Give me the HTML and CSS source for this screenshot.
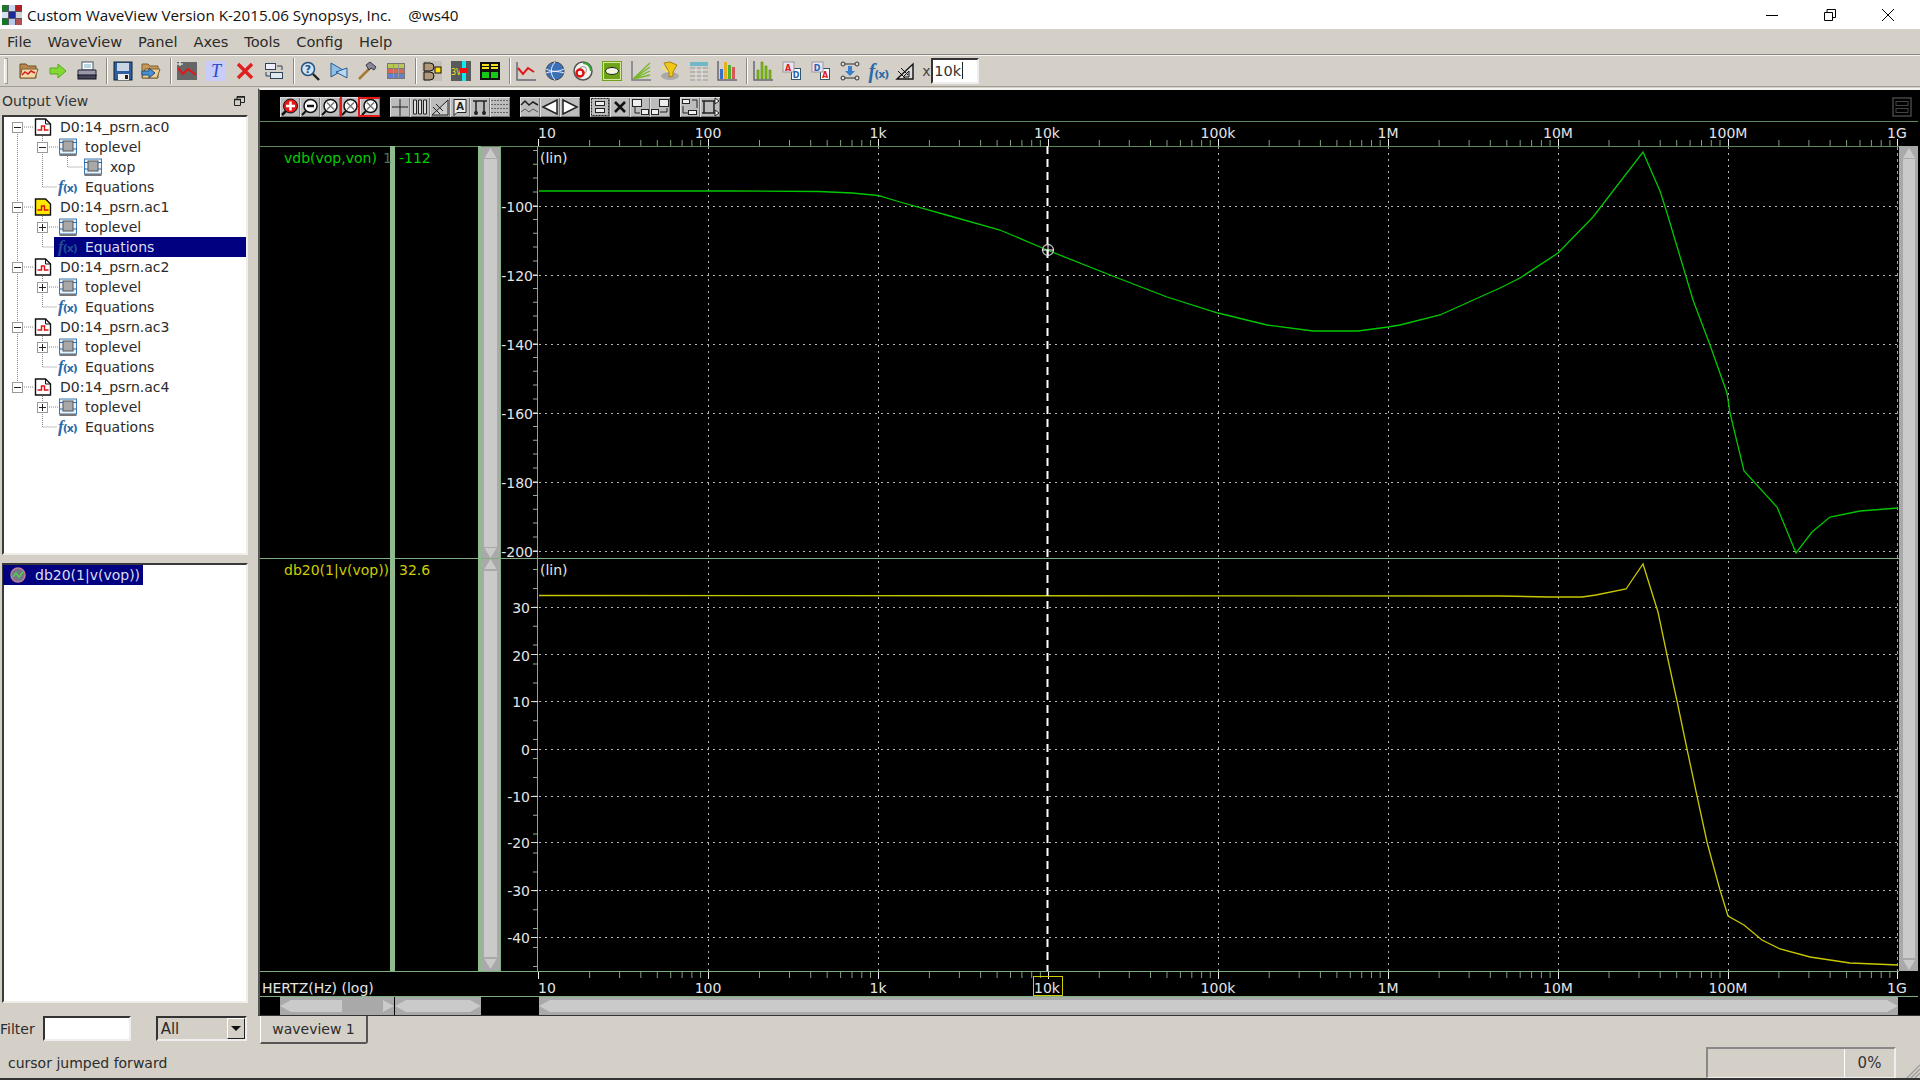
FILE: index.html
```html
<!DOCTYPE html>
<html lang="en">
<head>
<meta charset="utf-8">
<title>Custom WaveView</title>
<link rel="stylesheet" href="styles.css">
</head>
<body>
<svg class="defs" width="0" height="0">
  <symbol id="doc" viewBox="0 0 18 18"><path d="M1.5 1h10l5 5v11h-15z" fill="#fff" stroke="#111" stroke-width="1.4"/><path d="M11.5 1v5h5" fill="none" stroke="#111"/><path d="M3.5 12h4V8h3v4h4" fill="none" stroke="#e01010" stroke-width="1.4"/></symbol>
  <symbol id="docy" viewBox="0 0 18 18"><path d="M1.5 1h10l5 5v11h-15z" fill="#ffe800" stroke="#111" stroke-width="1.4"/><path d="M3.5 12h4V8h3v4h4" fill="none" stroke="#e01010" stroke-width="1.4"/></symbol>
  <symbol id="chip" viewBox="0 0 18 18"><rect x="0.5" y="1" width="17" height="15" fill="#e8f2fa" stroke="#3a7ab0"/><rect x="4" y="3" width="10" height="10" fill="#a8a8a8" stroke="#555"/><path d="M0 4.500h4M0 11h4M14 4.500h4M14 11h4" stroke="#2a6ab0"/><path d="M0.500 17h17" stroke="#777" stroke-width="2"/></symbol>
  <symbol id="fit" viewBox="0 0 20 20"><circle cx="10.500" cy="9" r="6.500" fill="#fff" stroke="#111" stroke-width="1.500"/><path d="M7 5.500l7 7M14 5.500l-7 7" stroke="#777" stroke-width="1.500"/><path d="M6 14l-4 4" stroke="#111" stroke-width="2"/></symbol>
  <g id="dec"><path d="M51.100 0v6M81.100 0v6M102.300 0v6M118.800 0v6M132.200 0v6M143.600 0v6M153.400 0v6M162.100 0v6" stroke="#7f9f7f" fill="none"/></g>
  <g id="decades"><use href="#dec" x="538.500"/><use href="#dec" x="708.400"/><use href="#dec" x="878.300"/><use href="#dec" x="1048.200"/><use href="#dec" x="1218.100"/><use href="#dec" x="1388"/><use href="#dec" x="1557.900"/><use href="#dec" x="1727.800"/></g>
</svg>

<header class="title">
  <svg class="title-icon" width="20" height="20" viewBox="0 0 20 20"><rect width="20" height="20" fill="#556"/><rect x="0" y="0" width="6" height="6" fill="#1a7a2a"/><rect x="7" y="0" width="6" height="6" fill="#c8d8f0"/><rect x="14" y="0" width="6" height="6" fill="#b02020"/><rect x="0" y="7" width="6" height="6" fill="#d8e0f0"/><rect x="7" y="7" width="6" height="6" fill="#1a2a9a"/><rect x="14" y="7" width="6" height="6" fill="#d0d0d0"/><rect x="0" y="14" width="6" height="6" fill="#107a20"/><rect x="7" y="14" width="6" height="6" fill="#b8c8e8"/><rect x="14" y="14" width="6" height="6" fill="#b05050"/></svg>
  <span class="title-text">Custom WaveView Version K-2015.06 Synopsys, Inc.</span>
  <span class="title-host">@ws40</span>
  <div class="win">
    <svg width="12" height="12" viewBox="0 0 12 12"><path d="M0 6.500h12" stroke="#000"/></svg>
    <svg width="12" height="12" viewBox="0 0 12 12"><path d="M.5 3.500h8v8h-8zM3 3.500V.5h8.500v8h-3" fill="none" stroke="#000"/></svg>
    <svg width="12" height="12" viewBox="0 0 12 12"><path d="M0 0l12 12M12 0L0 12" stroke="#000"/></svg>
  </div>
</header>

<nav class="menu"><span>File</span><span>WaveView</span><span>Panel</span><span>Axes</span><span>Tools</span><span>Config</span><span>Help</span></nav>

<div class="tb">
  <i class="grip"></i>
  <div class="tg">
    <svg class="ti" viewBox="0 0 20 20"><path d="M1 3h6l2 2h8v12H1z" fill="#b88850" stroke="#705020"/><path d="M3 8h16l-3 9H1z" fill="#f0d8a8" stroke="#806030"/><path d="M3 14l3-3 3 2 3-3 4 2" fill="none" stroke="#d02020" stroke-width="1.500"/></svg>
    <svg class="ti" viewBox="0 0 20 20"><path d="M2 7h8V3l8 7-8 7v-4H2z" fill="#84d832" stroke="#58a820"/></svg>
    <svg class="ti" viewBox="0 0 20 20"><rect x="5" y="1" width="11" height="8" fill="#fff" stroke="#456"/><path d="M7 4h7M7 6h7" stroke="#7ab"/><path d="M1 9h18v6H1z" fill="#99a" stroke="#223"/><rect x="1" y="14" width="18" height="4" fill="#445" stroke="#112"/></svg>
  </div>
  <i class="sep"></i>
  <div class="tg">
    <svg class="ti" viewBox="0 0 20 20"><rect x="1" y="1" width="18" height="18" fill="#2f5f9f" stroke="#123"/><rect x="4" y="2" width="12" height="8" fill="#c8d4e4"/><rect x="5" y="13" width="11" height="6" fill="#eee"/><rect x="12" y="14" width="3" height="4" fill="#222"/></svg>
    <svg class="ti" viewBox="0 0 20 20"><path d="M1 3h6l2 2h8v12H1z" fill="#c89858" stroke="#806030"/><path d="M4 8h15l-3 9H1z" fill="#ecd098" stroke="#806030"/><path d="M1 10h7V7l6 5-6 5v-3H1z" fill="#4a90d0" stroke="#205080"/></svg>
  </div>
  <i class="sep"></i>
  <div class="tg">
    <svg class="ti" viewBox="0 0 20 20"><rect width="20" height="18" y="1" fill="#666"/><path d="M1 7l5 6 5-5 8 6" fill="none" stroke="#e01818" stroke-width="2"/><path d="M3 0v5M0 3h6" stroke="#fff"/></svg>
    <svg class="ti" viewBox="0 0 20 20"><rect width="20" height="20" fill="#c8ccf8"/><text x="10" y="15.500" class="t-t">T</text></svg>
    <svg class="ti" viewBox="0 0 20 20"><path d="M3 3l14 14M17 3L3 17" stroke="#e02020" stroke-width="3.400"/></svg>
    <svg class="ti" viewBox="0 0 20 20"><rect x="1.500" y="2.500" width="10" height="6" fill="#eef" stroke="#345"/><rect x="6.500" y="11.500" width="12" height="6" fill="#dde8f0" stroke="#345"/><path d="M13 5h5v4M7 15H2v-4" fill="none" stroke="#345"/></svg>
  </div>
  <i class="sep"></i>
  <div class="tg">
    <svg class="ti" viewBox="0 0 20 20"><circle cx="8" cy="8" r="6.500" fill="#cfe4f8" stroke="#24507a" stroke-width="1.500"/><text x="8" y="12" class="t-q">?</text><path d="M13 13l6 6" stroke="#222" stroke-width="2.400"/></svg>
    <svg class="ti" viewBox="0 0 20 20"><path d="M2 2l12 7-12 7z" fill="#8cc0e8" stroke="#2a5a90"/><path d="M18 17L7 11l11-4z" fill="#b8d8f0" stroke="#2a5a90"/></svg>
    <svg class="ti" viewBox="0 0 20 20"><path d="M2 18L13 7" stroke="#a87838" stroke-width="2.500"/><path d="M9 4l4-3 6 5-2 3-3-2-2 2z" fill="#889" stroke="#334"/></svg>
    <svg class="ti" viewBox="0 0 20 20"><rect x="1" y="2" width="18" height="16" fill="#777"/><rect x="2" y="3" width="16" height="4" fill="#b8c850"/><rect x="2" y="8" width="16" height="4" fill="#d86858"/><rect x="2" y="13" width="16" height="4" fill="#6880c8"/><path d="M7.500 3v14M12.500 3v14" stroke="#999"/></svg>
  </div>
  <i class="sep"></i>
  <div class="tg">
    <svg class="ti" viewBox="0 0 20 20"><rect width="20" height="20" fill="#c4c0b8"/><path d="M2 2h6a4 4 0 010 8H2zM2 11h6a4 4 0 010 8H2z" fill="#b09878" stroke="#111"/><rect x="13" y="6" width="6" height="6" fill="#ffe000" stroke="#111"/></svg>
    <svg class="ti" viewBox="0 0 20 20"><rect width="20" height="20" fill="#5a5a5a"/><text x="0" y="14" class="t-v">3V</text><rect x="11" y="0" width="4" height="20" fill="#10e8f0"/><rect x="9" y="7" width="8" height="5" fill="#f01010"/></svg>
    <svg class="ti" viewBox="0 0 20 20"><rect x="0" y="1" width="20" height="18" fill="#111"/><rect x="2" y="3" width="7" height="2" fill="#f0e020"/><rect x="11" y="3" width="7" height="2" fill="#f0e020"/><rect x="2" y="6" width="7" height="2" fill="#f0e020"/><rect x="11" y="6" width="7" height="2" fill="#f0e020"/><rect x="2" y="11" width="7" height="6" fill="#18c818"/><rect x="11" y="11" width="7" height="6" fill="#18c818"/></svg>
  </div>
  <i class="sep"></i>
  <div class="tg">
    <svg class="ti" viewBox="0 0 20 20"><path d="M1 1v18h19" fill="none" stroke="#667" stroke-width="1.500"/><path d="M2 7l5 6 5-6 6 4" fill="none" stroke="#e01818" stroke-width="2"/></svg>
    <svg class="ti" viewBox="0 0 20 20"><circle cx="10" cy="10" r="9" fill="#3a70b8" stroke="#444"/><path d="M1 8c6 3 12 3 18 0M1 12c6-2 12-2 18 0M10 1c-5 6-5 12 0 18" fill="none" stroke="#eef"/></svg>
    <svg class="ti" viewBox="0 0 20 20"><circle cx="10" cy="10" r="9" fill="#f4f4f0" stroke="#555" stroke-width="1.500"/><path d="M10 2a8 8 0 018 8" fill="none" stroke="#38a838" stroke-width="2"/><circle cx="10" cy="9" r="3.500" fill="none" stroke="#999"/><circle cx="7" cy="12" r="3.500" fill="#fff" stroke="#e01010" stroke-width="2.500"/></svg>
    <svg class="ti" viewBox="0 0 20 20"><rect width="20" height="20" fill="#70a418"/><rect x="1.500" y="1.500" width="17" height="17" fill="none" stroke="#d8e8a0"/><ellipse cx="10" cy="10" rx="6.500" ry="3.500" fill="#f0f4e0" stroke="#222"/></svg>
    <svg class="ti" viewBox="0 0 20 20"><path d="M1 0v19h19" fill="none" stroke="#778" stroke-width="1.500"/><path d="M2 18L19 2M2 18L19 6M2 18L19 10M2 18L19 14" stroke="#78b828" stroke-width="1.300"/></svg>
    <svg class="ti" viewBox="0 0 20 20"><ellipse cx="10" cy="15" rx="9" ry="4" fill="#aaa"/><path d="M4 2l6-1 7 3-4 7v4l-4 1v-5z" fill="#f0c818" stroke="#a88010"/><path d="M2 6l6 5" stroke="#f8e060" stroke-width="2"/></svg>
    <svg class="ti" viewBox="0 0 20 20"><rect x="1" y="1" width="18" height="4" fill="#70b8c8"/><path d="M1 7h18M1 11h18M1 15h18M1 19h18" stroke="#aaa" stroke-width="1.500"/><path d="M7 6v14M13 6v14" stroke="#e8e8e8"/></svg>
    <svg class="ti" viewBox="0 0 20 20"><path d="M1 0v19h19" fill="none" stroke="#667" stroke-width="1.500"/><rect x="3" y="8" width="3" height="10" fill="#3a70c8"/><rect x="7" y="1" width="3" height="17" fill="#e8b020"/><rect x="11" y="4" width="3" height="14" fill="#50b030"/><rect x="15" y="6" width="3" height="12" fill="#d85858"/></svg>
  </div>
  <i class="sep"></i>
  <div class="tg">
    <svg class="ti" viewBox="0 0 20 20"><path d="M1 0v19h19" fill="none" stroke="#667" stroke-width="1.500"/><path d="M4 9h2v9H4zM8 1h2v17H8zM12 5h2v13h-2zM16 9h2v9h-2z" fill="#80c010" stroke="#508808" stroke-width=".6"/></svg>
    <svg class="ti" viewBox="0 0 20 20"><rect x="9.500" y="7.500" width="9" height="11" fill="#fff" stroke="#356"/><rect x="1" y="1" width="11" height="10" fill="#e8e4f8" stroke="#999"/><text x="6" y="9.500" class="t-a">A</text><text x="14" y="16.500" class="t-d">D</text></svg>
    <svg class="ti" viewBox="0 0 20 20"><rect x="9.500" y="7.500" width="9" height="11" fill="#fff" stroke="#356"/><rect x="1" y="1" width="11" height="10" fill="#e8e4f8" stroke="#999"/><text x="6" y="9.500" class="t-d">D</text><text x="14" y="16.500" class="t-a">A</text></svg>
    <svg class="ti" viewBox="0 0 20 20"><path d="M1 3h18M1 17h18" stroke="#333"/><circle cx="3" cy="3" r="2" fill="#ddd" stroke="#333"/><circle cx="17" cy="3" r="2" fill="#ddd" stroke="#333"/><circle cx="3" cy="17" r="2" fill="#ddd" stroke="#333"/><circle cx="17" cy="17" r="2" fill="#ddd" stroke="#333"/><path d="M8 5h4v5h3l-5 5-5-5h3z" fill="#3a80d0"/></svg>
    <span class="ti fx big">f<small>(x)</small></span>
    <svg class="ti" viewBox="0 0 20 20"><path d="M2 18L18 3v15z" fill="#ddd" stroke="#111" stroke-width="1.400"/><path d="M8 16l6-6v6z" fill="#ccc" stroke="#111"/><path d="M3 10l7 7M6 7l7 7" stroke="#111"/></svg>
  </div>
  <span class="x-label">x</span>
  <div class="entry"><span>10k</span><i class="caret"></i></div>
</div>

<main class="main">
  <aside class="left">
    <div class="ov-head"><span>Output View</span><svg width="11" height="10" viewBox="0 0 11 10"><path d="M.5 3.500h6v6h-6zM3 3V.5h7.500v6H7" fill="none" stroke="#222"/><path d="M0 3.500h7M3 1h8" stroke="#222" stroke-width="1.500"/></svg></div>
    <div class="tree">
      <svg class="tree-lines" width="242" height="436" viewBox="4 117 242 436"><path d="M17.500 132V382M24 127h10M24 207h10M24 267h10M24 327h10M24 387h10M42.500 136V187H57M49 147h9M67.500 154V167H83M42.500 216V247H57M49 227h9M42.500 276V307H57M49 287h9M42.500 336V367H57M49 347h9M42.500 396V427H57M49 407h9" fill="none" stroke="#888" stroke-dasharray="1 1"/></svg>
      <div class="row l0"><b class="exp minus"></b><svg class="ic"><use href="#doc"/></svg><span class="lbl">D0:14_psrn.ac0</span></div>
      <div class="row l1"><b class="exp minus"></b><div class="item"><svg class="ic"><use href="#chip"/></svg><span class="lbl">toplevel</span></div></div>
      <div class="row l2"><b class="exp none"></b><div class="item"><svg class="ic"><use href="#chip"/></svg><span class="lbl">xop</span></div></div>
      <div class="row l1"><b class="exp none"></b><div class="item"><span class="fx">f<small>(x)</small></span><span class="lbl">Equations</span></div></div>
      <div class="row l0"><b class="exp minus"></b><svg class="ic"><use href="#docy"/></svg><span class="lbl">D0:14_psrn.ac1</span></div>
      <div class="row l1"><b class="exp plus"></b><div class="item"><svg class="ic"><use href="#chip"/></svg><span class="lbl">toplevel</span></div></div>
      <div class="row l1"><b class="exp none"></b><div class="item sel"><span class="fx">f<small>(x)</small></span><span class="lbl">Equations</span></div></div>
      <div class="row l0"><b class="exp minus"></b><svg class="ic"><use href="#doc"/></svg><span class="lbl">D0:14_psrn.ac2</span></div>
      <div class="row l1"><b class="exp plus"></b><div class="item"><svg class="ic"><use href="#chip"/></svg><span class="lbl">toplevel</span></div></div>
      <div class="row l1"><b class="exp none"></b><div class="item"><span class="fx">f<small>(x)</small></span><span class="lbl">Equations</span></div></div>
      <div class="row l0"><b class="exp minus"></b><svg class="ic"><use href="#doc"/></svg><span class="lbl">D0:14_psrn.ac3</span></div>
      <div class="row l1"><b class="exp plus"></b><div class="item"><svg class="ic"><use href="#chip"/></svg><span class="lbl">toplevel</span></div></div>
      <div class="row l1"><b class="exp none"></b><div class="item"><span class="fx">f<small>(x)</small></span><span class="lbl">Equations</span></div></div>
      <div class="row l0"><b class="exp minus"></b><svg class="ic"><use href="#doc"/></svg><span class="lbl">D0:14_psrn.ac4</span></div>
      <div class="row l1"><b class="exp plus"></b><div class="item"><svg class="ic"><use href="#chip"/></svg><span class="lbl">toplevel</span></div></div>
      <div class="row l1"><b class="exp none"></b><div class="item"><span class="fx">f<small>(x)</small></span><span class="lbl">Equations</span></div></div>
    </div>
    <div class="hsash"></div>
    <div class="list">
      <div class="list-row"><svg width="16" height="16" viewBox="0 0 16 16"><circle cx="8" cy="8" r="7" fill="#77778a" stroke="#c08090" stroke-width="1.500"/><path d="M3 10l3-4 3 4 4-5" fill="none" stroke="#50d050" stroke-width="1.500"/></svg><span>db20(1|v(vop))</span></div>
    </div>
    <div class="filter">
      <span>Filter</span>
      <div class="f-input"></div>
      <div class="combo"><span>All</span><b class="combo-btn"></b></div>
    </div>
  </aside>

  <section class="right">
    <div class="wave">
      <div class="tools2">
        <div class="g2">
          <i class="b2"><svg viewBox="0 0 20 20"><circle cx="10.500" cy="9" r="7" fill="#e81818" stroke="#111"/><path d="M6 9h9M10.500 4.500v9" stroke="#fff" stroke-width="2.500"/><path d="M6 14l-4 4" stroke="#111" stroke-width="2.500"/></svg></i>
          <i class="b2"><svg viewBox="0 0 20 20"><circle cx="10.500" cy="9" r="6.500" fill="#fff" stroke="#111" stroke-width="1.500"/><path d="M7 9h7" stroke="#111" stroke-width="2.500"/><path d="M6 14l-4 4" stroke="#111" stroke-width="2"/></svg></i>
          <i class="b2"><svg><use href="#fit"/></svg></i>
          <i class="b2"><svg viewBox="0 0 20 20"><use href="#fit" width="20" height="20"/><path d="M1 0v20M19 0v20" stroke="#e81818" stroke-width="2"/></svg></i>
          <i class="b2"><svg viewBox="0 0 20 20"><use href="#fit" width="20" height="20"/><path d="M0 1h20M0 19h20" stroke="#e81818" stroke-width="2"/></svg></i>
        </div>
        <div class="g2">
          <i class="b2"><svg viewBox="0 0 20 20"><path d="M2 10h16M10 2v17" stroke="#222"/></svg></i>
          <i class="b2"><svg viewBox="0 0 20 20"><path d="M3.500 3h3v14h-3zM8.500 3h3v14h-3zM13.500 3h3v14h-3z" fill="#ddd" stroke="#222"/></svg></i>
          <i class="b2"><svg viewBox="0 0 20 20"><path d="M2 18L18 3v15z" fill="#ccc" stroke="#222"/><path d="M3 10l7 7M6 7l7 7" stroke="#222"/></svg></i>
          <i class="b2"><svg viewBox="0 0 20 20"><path d="M4 2.500h12v13H7l-3 3z" fill="#eee" stroke="#222"/><text x="10" y="13" class="t-b">A</text></svg></i>
          <i class="b2"><svg viewBox="0 0 20 20"><path d="M3 4h14M6 4v11M14 4v11" stroke="#222" stroke-width="1.500"/><circle cx="6" cy="16" r="2" fill="#222"/><circle cx="14" cy="16" r="2" fill="#222"/></svg></i>
          <i class="b2"><svg viewBox="0 0 20 20"><path d="M1 3.500h18M1 7.500h18M1 11.500h18M1 15.500h18" stroke="#666" stroke-dasharray="2 1"/></svg></i>
        </div>
        <div class="g2">
          <i class="b2"><svg viewBox="0 0 20 20"><path d="M1 8l4-4 4 4 4-3 5 3" fill="none" stroke="#222" stroke-width="1.500"/><path d="M1 15l4-3 4 3 4-3 5 3" fill="none" stroke="#555"/></svg></i>
          <i class="b2"><svg viewBox="0 0 20 20"><path d="M3 10l14-7v14z" fill="#fff" stroke="#222" stroke-width="1.500"/></svg></i>
          <i class="b2"><svg viewBox="0 0 20 20"><path d="M17 10L3 3v14z" fill="#fff" stroke="#222" stroke-width="1.500"/></svg></i>
        </div>
        <div class="g2">
          <i class="b2"><svg viewBox="0 0 20 20"><rect x="1.500" y="1.500" width="17" height="17" fill="none" stroke="#222" stroke-dasharray="2 1"/><rect x="5.500" y="4.500" width="9" height="4" fill="#eee" stroke="#222"/><rect x="5.500" y="11.500" width="9" height="4" fill="#eee" stroke="#222"/></svg></i>
          <i class="b2"><svg viewBox="0 0 20 20"><path d="M5 5l10 10M15 5L5 15" stroke="#111" stroke-width="2.500"/></svg></i>
          <i class="b2"><svg viewBox="0 0 20 20"><rect x="2.500" y="2.500" width="9" height="7" fill="#eee" stroke="#222"/><rect x="11.500" y="12.500" width="7" height="5" fill="#eee" stroke="#222"/><path d="M5 10v6h5" fill="none" stroke="#222"/></svg></i>
          <i class="b2"><svg viewBox="0 0 20 20"><rect x="9.500" y="2.500" width="9" height="7" fill="#eee" stroke="#222"/><rect x="1.500" y="12.500" width="7" height="5" fill="#eee" stroke="#222"/><path d="M10 15h7v-4" fill="none" stroke="#222"/></svg></i>
        </div>
        <div class="g2">
          <i class="b2"><svg viewBox="0 0 20 20"><rect x="2.500" y="2.500" width="7" height="4" fill="#eee" stroke="#222"/><rect x="8.500" y="13.500" width="8" height="4" fill="#eee" stroke="#222"/><path d="M3 9v7h5M12 3h5v8" fill="none" stroke="#222"/></svg></i>
          <i class="b2"><svg viewBox="0 0 20 20"><path d="M2 4h13M2 16h13M4 4v12M14 4v12" stroke="#222" stroke-width="1.500"/><path d="M15 1l4 3-4 3zM15 13l4 3-4 3z" fill="#fff" stroke="#222"/></svg></i>
        </div>
        <svg class="pane-ic" width="20" height="20" viewBox="0 0 20 20"><rect x="1" y="1" width="18" height="18" fill="none" stroke="#444" stroke-width="1.500"/><rect x="4" y="4.500" width="12" height="4" fill="none" stroke="#444"/><rect x="4" y="11.500" width="12" height="4" fill="none" stroke="#444"/></svg>
      </div>

      <svg class="plot" width="1658" height="876" viewBox="260 121 1658 876">
        <!-- scrollbar troughs -->
        <rect x="481" y="146" width="19" height="825" class="trough"/>
        <rect x="1899" y="146" width="19" height="825" class="trough"/>
        <rect x="484" y="159" width="13" height="388" class="thumb"/>
        <rect x="484" y="571" width="13" height="386" class="thumb"/>
        <rect x="1903" y="159" width="12" height="799" class="thumb"/>
        <path class="thumb" d="M490.500 148l6 10h-12zM490.500 558l6-10h-12zM490.500 559l6 10h-12zM490.500 969l6-10h-12zM1909 148l6 10h-12zM1909 970l6-10h-12z"/>

        <!-- frame -->
        <path class="frame" d="M260 121.500h1658M260 146.500h1639"/>
        <path class="frame2" d="M260 558.500h1639M260 971.500h1639M260 996.500h1658M500.500 146v825M537.500 146v825"/>
        <rect x="390" y="146" width="5" height="825" class="bar"/>
        <rect x="478" y="146" width="3" height="825" class="bar"/>

        <!-- axis ticks -->
        <use href="#decades" y="140"/>
        <use href="#decades" y="972"/>
        <path class="major" d="M538.500 139v7M708.500 139v7M878.500 139v7M1048.500 139v7M1218.500 139v7M1388.500 139v7M1558.500 139v7M1728.500 139v7M1897.500 139v7M538.500 972v7M708.500 972v7M878.500 972v7M1048.500 972v7M1218.500 972v7M1388.500 972v7M1558.500 972v7M1728.500 972v7M1897.500 972v7"/>
        <path class="ytick y1" d="M535.500 150V558"/>
        <path class="ytick y2" d="M535.500 569V968"/>
        <path class="ymajor" d="M533 206.500h5M533 275.500h5M533 344.500h5M533 413.500h5M533 482.500h5M533 551.500h5M531 607.500h7M531 654.500h7M531 701.500h7M531 749.500h7M531 796.500h7M531 842.500h7M531 890.500h7M531 937.500h7"/>

        <!-- grid -->
        <path class="grid" d="M539 206.500H1897M539 275.500H1897M539 344.500H1897M539 413.500H1897M539 482.500H1897M539 551.500H1897M539 607.500H1897M539 654.500H1897M539 701.500H1897M539 749.500H1897M539 796.500H1897M539 842.500H1897M539 890.500H1897M539 937.500H1897"/>
        <path class="grid" d="M708.500 147V971M878.500 147V971M1218.500 147V971M1388.500 147V971M1558.500 147V971M1728.500 147V971"/>
        <path class="edge" d="M1897.500 147V971"/>

        <!-- waveforms -->
        <polyline class="wave-g" points="539,191 733,191 819,191.500 852,193 878,195.500 900,202 950,216 1000,230 1047,250 1110,275 1167,297 1218,313 1267,325 1313,331 1358,331 1388,327 1400,325 1440,315 1480,297 1500,288 1520,278 1558,253 1593,217 1643,152 1660,191 1667,213 1693,300 1710,345 1727,393 1730,413 1744,471 1777,507 1796,553 1812,532 1830,517 1860,511 1898,508"/>
        <polyline class="wave-y" points="539,595.500 1500,596 1550,597 1582,597 1596,595 1626,589 1643,564 1658,612 1667,655 1677,701 1687,749 1697,796 1707,842 1711,857 1720,890 1728,916 1744,925 1762,940 1780,949 1810,957 1850,963 1898,965"/>

        <!-- cursor -->
        <path class="cursor" d="M1047.500 146V971"/>
        <circle class="mk" cx="1048" cy="250" r="5.500"/>
        <path class="mk2" d="M1042 250h12M1048 244v12"/>

        <!-- axis labels -->
        <g class="ax">
          <text x="538" y="138">10</text>
          <g class="c"><text x="708" y="138">100</text><text x="878" y="138">1k</text><text x="1047" y="138">10k</text><text x="1218" y="138">100k</text><text x="1388" y="138">1M</text><text x="1558" y="138">10M</text><text x="1728" y="138">100M</text><text x="1897" y="138">1G</text></g>
          <text x="540" y="163">(lin)</text>
          <text x="540" y="575">(lin)</text>
          <g class="r">
            <text x="533" y="212">-100</text><text x="533" y="281">-120</text><text x="533" y="350">-140</text><text x="533" y="419">-160</text><text x="533" y="488">-180</text><text x="533" y="557">-200</text>
            <text x="530" y="613">30</text><text x="530" y="661">20</text><text x="530" y="707">10</text><text x="530" y="755">0</text><text x="530" y="802">-10</text><text x="530" y="848">-20</text><text x="530" y="896">-30</text><text x="530" y="943">-40</text>
          </g>
          <text x="262" y="993">HERTZ(Hz) (log)</text>
          <text x="538" y="993">10</text>
          <g class="c"><text x="708" y="993">100</text><text x="878" y="993">1k</text><text x="1047" y="993">10k</text><text x="1218" y="993">100k</text><text x="1388" y="993">1M</text><text x="1558" y="993">10M</text><text x="1728" y="993">100M</text><text x="1897" y="993">1G</text></g>
        </g>
        <rect class="hl" x="1033.500" y="976.500" width="29" height="19"/>

        <!-- signal names -->
        <text class="sig-g" x="284" y="163">vdb(vop,von)</text>
        <text class="sig-dim" x="383" y="163">1</text>
        <text class="sig-g" x="399" y="163">-112</text>
        <text class="sig-y" x="284" y="575">db20(1|v(vop))</text>
        <text class="sig-y" x="399" y="575">32.6</text>
      </svg>

      <div class="hscrolls">
        <div class="sb s1"><i class="ta-l"></i><i class="sb-th"></i><i class="ta-r"></i></div>
        <div class="sb s2"><i class="ta-l"></i><i class="sb-th"></i><i class="ta-r"></i></div>
        <div class="sb s3"><i class="ta-l"></i><i class="sb-th"></i><i class="ta-r"></i></div>
      </div>
    </div>
    <div class="tabs"><div class="tab">waveview 1</div></div>
  </section>
</main>

<footer class="status">
  <span class="st-msg">cursor jumped forward</span>
  <div class="progress"><div class="pg-bar"></div><div class="pg-val">0%</div></div>
  <svg class="sz" width="15" height="15" viewBox="0 0 15 15"><path d="M15 2L2 15M15 6L6 15M15 10L10 15" stroke="#999" stroke-width="1.200"/></svg>
</footer>
</body>
</html>
```

FILE: styles.css
```css
html, body { margin: 0; padding: 0; }
body {
  width: 1920px; height: 1080px; overflow: hidden;
  background: #d4d0c8; color: #2b2b2b;
  font: 14px "DejaVu Sans", sans-serif;
  display: flex; flex-direction: column;
}
i, b { font-style: normal; font-weight: normal; }
.defs { position: absolute; }

.title {
  height: 29px; flex: none; background: #fff; color: #111;
  display: flex; align-items: center; padding-left: 2px;
  font: 15.2px "Open Sans", sans-serif;
}
.title-icon { margin-right: 5px; }
.title-host { margin-left: 17px; }
.win { margin-left: auto; margin-right: 26px; display: flex; gap: 46px; }

.menu {
  height: 25px; flex: none; box-sizing: border-box;
  display: flex; align-items: center; gap: 16px; padding-left: 7px;
  font-size: 14.6px;
}
.tb {
  height: 33px; flex: none; box-sizing: border-box;
  border-top: 1px solid #8a8880; box-shadow: inset 0 1px 0 #f4f2ee;
  border-bottom: 1px solid #a09c94;
  display: flex; align-items: center; padding-left: 4px;
}
.grip { width: 2px; height: 24px; border: 1px solid #999; border-left-color: #fff; background: #e8e6e0; margin-right: 11px; }
.tg { display: flex; gap: 8.8px; align-items: center; }
.ti { width: 20px; height: 20px; display: block; flex: none; }
.sep { width: 1px; height: 26px; background: #8a8880; border-right: 1px solid #fff; margin: 0 5px 0 9px; }
.x-label { margin-left: 7px; width: 9px; color: #444; }
.entry {
  width: 48px; height: 26px; box-sizing: border-box; background: #fff;
  border: 2px solid; border-color: #333 #eee #eee #333; color: #333;
  display: flex; align-items: center; padding-left: 1px; font-size: 14.5px;
}
.caret { width: 1px; height: 17px; background: #222; margin-left: 1px; }

.t-t { font: italic 18px "Liberation Serif", serif; fill: #2a4ac8; text-anchor: middle; }
.t-q { font: bold 11px "DejaVu Sans", sans-serif; fill: #24507a; text-anchor: middle; }
.t-v { font: 8px "DejaVu Sans", sans-serif; fill: #f0e020; }
.t-a { font: bold 8px "DejaVu Sans", sans-serif; fill: #e02020; text-anchor: middle; }
.t-d { font: bold 8px "DejaVu Sans", sans-serif; fill: #2a60b0; text-anchor: middle; }
.t-b { font: bold 10px "DejaVu Sans", sans-serif; fill: #222; text-anchor: middle; }

.main { flex: 1; display: flex; min-height: 0; }
.left { width: 250px; flex: none; margin-right: 8px; display: flex; flex-direction: column; padding-top: 1px; }
.ov-head { height: 25px; margin-bottom: 2px; display: flex; align-items: center; justify-content: space-between; padding: 0 5px 0 2px; color: #333; }

.tree, .list {
  box-sizing: border-box; height: 440px; width: 246px; margin-left: 2px; flex: none;
  background: #fff; border: 2px solid; border-color: #3a3a3a #f0eee8 #f0eee8 #3a3a3a;
  position: relative;
}
.tree-lines { position: absolute; left: 0; top: 0; }
.hsash { height: 8px; flex: none; }
.row { height: 20px; display: flex; align-items: center; position: relative; }
.l0 { padding-left: 7px; }
.l1 { padding-left: 32px; }
.l2 { padding-left: 57px; }
.exp {
  width: 11px; height: 11px; margin: 0 1px; box-sizing: border-box; flex: none;
  border: 1px solid #999; background: #fff; position: relative;
}
.exp.none { border: 0; background: none; }
.exp.minus::before, .exp.plus::before { content: ""; position: absolute; left: 1px; top: 4px; width: 7px; height: 1px; background: #222; }
.exp.plus::after { content: ""; position: absolute; left: 4px; top: 1px; width: 1px; height: 7px; background: #222; }
.ic { width: 18px; height: 18px; flex: none; display: block; }
.l0 .ic { margin-left: 10px; margin-right: 8px; }
.item { display: flex; align-items: center; height: 20px; margin-left: 5px; padding-left: 5px; }
.item .ic { margin-right: 8px; }
.item.sel { flex: 1; background: #000080; color: #dcdcee; }
.fx {
  width: 18px; margin: 0 8px 0 -1px; padding-right: 1px; flex: none; text-align: center; white-space: nowrap;
  font: italic bold 17px "Liberation Serif", serif; color: #2a6aa8; letter-spacing: -1px;
}
.fx small { font: bold 11px "DejaVu Sans", sans-serif; }
.sel .fx { color: #1f4f90; }
.fx.big { margin: 0; padding: 0; font-size: 20px; line-height: 20px; }

.list-row {
  width: 140px; height: 20px; margin: 0 0 0 -1px; padding-left: 7px; box-sizing: border-box;
  background: #000080; color: #dcdcee; display: flex; align-items: center; gap: 9px;
}
.filter { display: flex; align-items: center; height: 25px; margin-top: 13px; }
.f-input {
  width: 88px; height: 25px; box-sizing: border-box; margin-left: 8px; background: #fff;
  border: 2px solid; border-color: #333 #eee #eee #333;
}
.combo {
  width: 91px; height: 25px; box-sizing: border-box; margin-left: 25px;
  border: 2px solid; border-color: #333 #eee #eee #333;
  display: flex; align-items: center; justify-content: space-between; padding-left: 3px; font-size: 15px;
}
.combo-btn {
  width: 18px; height: 21px; box-sizing: border-box; background: #d4d0c8; position: relative;
  border: 1px solid; border-color: #fff #222 #222 #fff;
}
.combo-btn::before {
  content: ""; position: absolute; left: 3px; top: 7px;
  border: 5px solid transparent; border-top-color: #111; border-bottom: 0;
}

.right { flex: 1; min-width: 0; display: flex; flex-direction: column; }
.wave {
  width: 1660px; box-sizing: content-box; margin-top: 1px; background: #000; flex: none;
  border-top: 2px solid #f4f2ee; border-left: 2px solid #555; border-bottom: 1px solid #333;
}
.tools2 { height: 31px; box-sizing: border-box; padding: 7px 0 0 20px; display: flex; gap: 10px; position: relative; }
.g2 { display: flex; }
.b2 { width: 20px; height: 20px; display: block; background: #bcbcbc; box-shadow: inset 1px 1px 0 #dedede, inset -1px -1px 0 #777; }
.b2 svg { width: 20px; height: 20px; display: block; }
.pane-ic { margin-left: auto; margin-right: 8px; }

.plot { display: block; background: #000; width: 1658px; height: 876px; }
.trough { fill: #a9a9a9; }
.thumb { fill: #cacaca; }
.frame { stroke: #5d8a5d; fill: none; }
.frame2 { stroke: #7fae7f; fill: none; }
.bar { fill: #8fbc8f; }
.major { stroke: #eee; fill: none; }
.ytick { stroke: #8fae8f; stroke-width: 5px; fill: none; }
.y1 { stroke-dasharray: 1 12.8; }
.y2 { stroke-dasharray: 1 17.9; }
.ymajor { stroke: #ddd; fill: none; }
.grid { stroke: #b4b4b4; stroke-dasharray: 2 4; fill: none; }
.edge { stroke: #9aa89a; stroke-dasharray: 3 3; fill: none; }
.wave-g { fill: none; stroke: #00c800; stroke-width: 1.3px; }
.wave-y { fill: none; stroke: #c8c800; stroke-width: 1.3px; }
.cursor { stroke: #fff; stroke-width: 2px; stroke-dasharray: 8 5; fill: none; }
.mk { fill: none; stroke: #bbb; stroke-width: 1.300px; }
.mk2 { stroke: #fff; fill: none; }
.hl { fill: none; stroke: #cdcd00; }
.ax text { font: 14px "DejaVu Sans", sans-serif; fill: #e5e5e5; }
.ax .c text { text-anchor: middle; }
.ax .r text { text-anchor: end; }
.sig-g, .sig-y, .sig-dim { font: 14px "DejaVu Sans", sans-serif; }
.sig-g { fill: #00cd00; }
.sig-y { fill: #cdcd00; }
.sig-dim { fill: #4f6f4f; }

.hscrolls { height: 18px; display: flex; padding-left: 20px; background: #000; }
.sb { background: #a9a9a9; display: flex; align-items: center; }
.s1 { width: 114px; margin-right: 1px; }
.s2 { width: 86px; margin-right: 58px; }
.s3 { width: 1359px; }
.sb-th { height: 12px; background: #cacaca; }
.s1 .sb-th { width: 51px; margin-right: 41px; }
.s2 .sb-th { width: 64px; }
.s3 .sb-th { width: 1337px; }
.ta-l, .ta-r { width: 0; height: 0; border: 6px solid transparent; border-left-width: 0; border-right-width: 0; }
.ta-l { border-right: 11px solid #cacaca; }
.ta-r { border-left: 11px solid #cacaca; }

.tabs { height: 29px; padding-left: 2px; }
.tab {
  width: 108px; height: 28px; box-sizing: border-box; text-align: center; line-height: 27px;
  background: #d4d0c8; border-right: 2px solid #555; border-bottom: 2px solid #555; border-left: 1px solid #fff;
  border-bottom-right-radius: 3px;
}

.status {
  height: 35px; flex: none; box-sizing: border-box; border-bottom: 2px solid #333;
  display: flex; align-items: flex-end; padding-left: 8px;
}
.st-msg { align-self: center; margin-top: 2px; }
.progress {
  margin-left: auto; width: 190px; height: 31px; box-sizing: border-box; display: flex;
  border: 2px solid; border-color: #888 #eee #eee #888; border-bottom-width: 1px;
}
.pg-bar { width: 136px; border-right: 1px solid #fff; }
.pg-val { flex: 1; text-align: center; line-height: 29px; font-size: 15px; color: #333; }
.sz { margin-left: 9px; display: block; }
```
